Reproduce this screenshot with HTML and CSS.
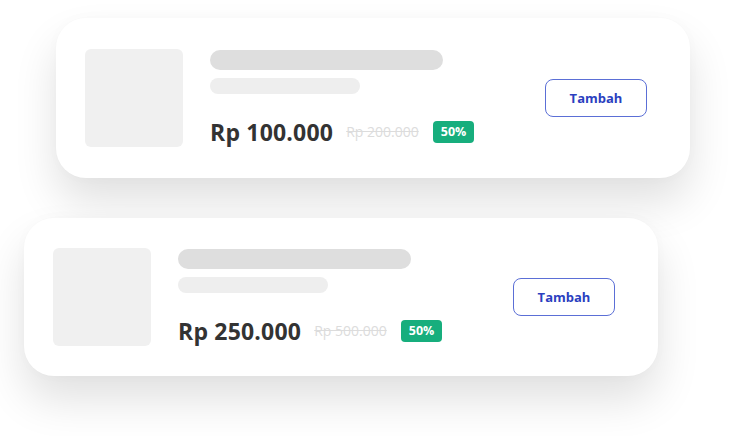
FILE: index.html
```html
<!DOCTYPE html>
<html>

<head>
    <meta charset="UTF-8">
    <title>Produk</title>
    <link rel="stylesheet" href="styles.css">
</head>

<body>
    <div class="list">
        <div class="card card-1">
            <div class="thumb"></div>
            <div class="info">
                <div class="bar bar-title"></div>
                <div class="bar bar-sub"></div>
                <div class="price-row">
                    <span class="price">Rp 100.000</span>
                    <span class="old-price">Rp 200.000</span>
                    <span class="badge">50%</span>
                </div>
            </div>
            <button class="add-btn">Tambah</button>
        </div>

        <div class="card card-2">
            <div class="thumb"></div>
            <div class="info">
                <div class="bar bar-title"></div>
                <div class="bar bar-sub"></div>
                <div class="price-row">
                    <span class="price">Rp 250.000</span>
                    <span class="old-price">Rp 500.000</span>
                    <span class="badge">50%</span>
                </div>
            </div>
            <button class="add-btn">Tambah</button>
        </div>
    </div>
</body>

</html>
```

FILE: styles.css
```css
* {
    margin: 0;
    padding: 0;
    box-sizing: border-box;
}

body,
html {
    height: 100%;
    overflow: hidden;
    background: #fff;
}

body {
    font-family: "Open Sans", "Liberation Sans", sans-serif;
}

.list {
    display: flex;
    flex-direction: column;
    gap: 40px;
    padding-top: 18px;
}

.card {
    width: 634px;
    height: 160px;
    background: #fff;
    border-radius: 30px;
    box-shadow: 0 24px 44px rgba(0, 0, 0, 0.12), 0 0 14px rgba(0, 0, 0, 0.02);
    display: flex;
    align-items: center;
    padding: 0 43px 0 29px;
}

.card-1 {
    margin-left: 56px;
}

.card-2 {
    margin-left: 24px;
    height: 158px;
}

.thumb {
    width: 98px;
    height: 98px;
    background: #f0f0f0;
    border-radius: 6px;
    flex-shrink: 0;
}

.info {
    flex: 1;
    margin-left: 27px;
    display: flex;
    flex-direction: column;
}

.bar {
    border-radius: 10px;
}

.bar-title {
    width: 233px;
    height: 20px;
    background: #dedede;
}

.bar-sub {
    width: 150px;
    height: 16px;
    margin-top: 8px;
    background: #eeeeee;
}

.price-row {
    display: flex;
    align-items: center;
    height: 30px;
    margin-top: 23px;
}

.price {
    font-size: 23px;
    font-weight: 700;
    color: #333;
    letter-spacing: 0.2px;
}

.old-price {
    margin-left: 13px;
    font-size: 14px;
    color: #dcdcdc;
    text-decoration: line-through;
}

.badge {
    margin-left: 14px;
    background: #17ae7d;
    color: #fff;
    font-size: 12.5px;
    font-weight: 700;
    border-radius: 4px;
    padding: 0 8px;
    height: 22px;
    line-height: 22px;
}

.add-btn {
    width: 102px;
    height: 38px;
    border: 1.5px solid #5b6fd6;
    border-radius: 8px;
    background: #fff;
    color: #2b3fc0;
    font-family: inherit;
    font-size: 13px;
    font-weight: 700;
}
```
